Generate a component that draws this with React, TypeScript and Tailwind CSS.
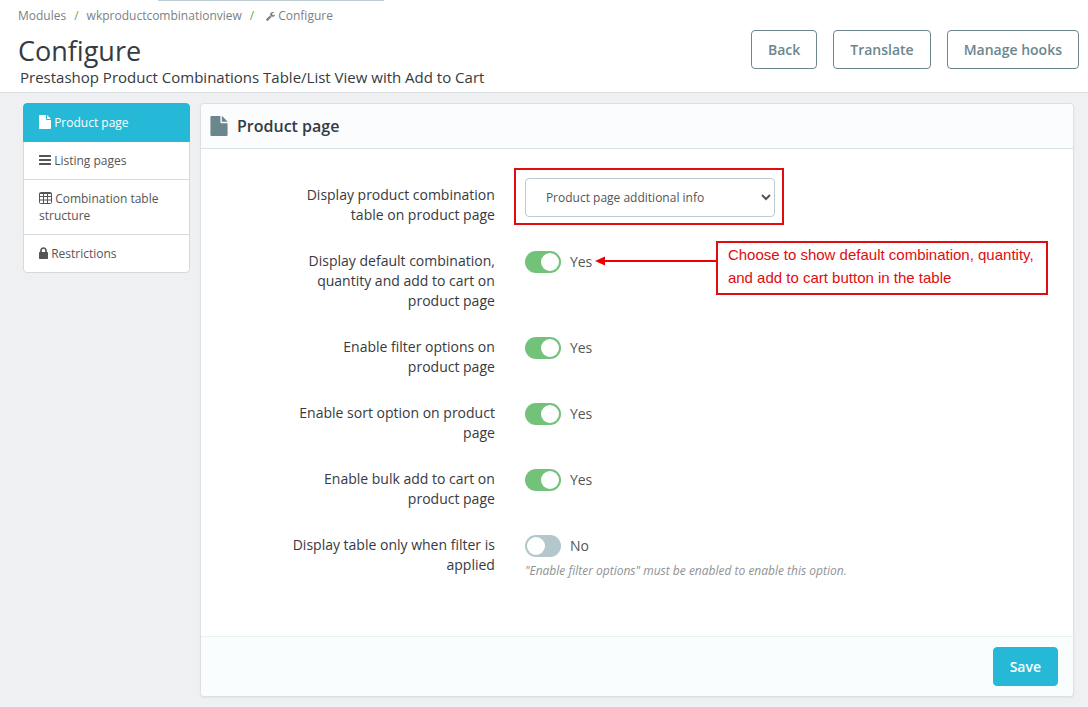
import { useState } from 'react';
import type { ReactNode } from 'react';

interface ToggleOption {
  id: string;
  label: string;
  enabled: boolean;
  hint?: string;
  note?: string;
}

const INITIAL_OPTIONS: ToggleOption[] = [
  {
    id: 'default-combination',
    label: 'Display default combination, quantity and add to cart on product page',
    enabled: true,
    note: 'Choose to show default combination, quantity, and add to cart button in the table',
  },
  { id: 'filter', label: 'Enable filter options on product page', enabled: true },
  { id: 'sort', label: 'Enable sort option on product page', enabled: true },
  { id: 'bulk', label: 'Enable bulk add to cart on product page', enabled: true },
  {
    id: 'only-filtered',
    label: 'Display table only when filter is applied',
    enabled: false,
    hint: '"Enable filter options" must be enabled to enable this option.',
  },
];

function FileIcon({ className }: { className: string }) {
  return (
    <svg viewBox="0 0 12 14" className={className} fill="currentColor" aria-hidden="true">
      <path d="M7 0v4.25c0 .41.34.75.75.75H12v8.25a.75.75 0 0 1-.75.75H.75a.75.75 0 0 1-.75-.75V.75C0 .34.34 0 .75 0H7Zm1 .07c.2.06.38.17.53.32l3.08 3.08c.15.15.26.33.32.53H8V.07Z" />
    </svg>
  );
}

function BarsIcon({ className }: { className: string }) {
  return (
    <svg viewBox="0 0 12 12" className={className} fill="currentColor" aria-hidden="true">
      <rect x="0" y="1" width="12" height="2" rx="0.2" />
      <rect x="0" y="5" width="12" height="2" rx="0.2" />
      <rect x="0" y="9" width="12" height="2" rx="0.2" />
    </svg>
  );
}

function TableIcon({ className }: { className: string }) {
  return (
    <svg viewBox="0 0 13 12" className={className} aria-hidden="true">
      <rect x="0.5" y="0.5" width="12" height="11" rx="1" fill="none" stroke="currentColor" />
      <path d="M0.5 1.5h12M0.5 4.500h12M0.5 8h12M4.500 1v10.5M8.5 1v10.5" stroke="currentColor" fill="none" />
    </svg>
  );
}

function LockIcon({ className }: { className: string }) {
  return (
    <svg viewBox="0 0 9 12" className={className} aria-hidden="true">
      <rect x="0" y="5" width="9" height="7" rx="0.7" fill="currentColor" />
      <path d="M2 5.5V3.5a2.5 2.5 0 0 1 5 0v2" fill="none" stroke="currentColor" strokeWidth="1.7" />
    </svg>
  );
}

function WrenchIcon({ className }: { className: string }) {
  return (
    <svg viewBox="0 0 1664 1664" className={className} fill="currentColor" aria-hidden="true">
      <path d="M1028 924l-682 682q-37 37-90 37-52 0-91-37L59 1498q-38-36-38-90 0-53 38-91l681-681q39 98 114.500 173.500T1028 924zm634-435q0 39-23 106-47 134-164.500 217.500T1216 896q-185 0-316.500-131.500T768 448t131.500-316.500T1216 0q58 0 121.500 16.500T1445 63q16 11 16 28t-16 28l-293 169v224l193 107q5-3 79-48.500t135.500-81T1630 454q15 0 23.500 10t8.500 25z" />
    </svg>
  );
}

interface NavItem {
  label: string;
  icon: ReactNode;
}

const NAV_ITEMS: NavItem[] = [
  { label: 'Product page', icon: <FileIcon className="inline h-[14px] w-[12px] align-[-2px]" /> },
  { label: 'Listing pages', icon: <BarsIcon className="inline size-3 align-[-1px]" /> },
  { label: 'Combination table structure', icon: <TableIcon className="inline h-3 w-[13px] align-[-1px]" /> },
  { label: 'Restrictions', icon: <LockIcon className="inline h-3 w-[9px] align-[-1px]" /> },
];

function HeaderButton({ children }: { children: ReactNode }) {
  return (
    <button
      type="button"
      className="h-[39px] rounded border border-[#6c868e] px-4 text-sm font-semibold text-[#6c868e] hover:bg-[#6c868e] hover:text-white"
    >
      {children}
    </button>
  );
}

function Callout({ text }: { text: string }) {
  return (
    <div className="absolute top-[-10px] left-[70px] flex items-start">
      <svg viewBox="0 0 121 10" className="mt-[15px] h-[10px] w-[121px] shrink-0" aria-hidden="true">
        <path d="M8 5h113" stroke="#ee0000" strokeWidth="2" />
        <path d="M0 5l10-4.500v9z" fill="#ee0000" />
      </svg>
      <p className="w-[332px] border-2 border-[#e00c0f] px-[10px] pb-1 font-['Liberation_Sans',Arial,sans-serif] text-[15px] leading-[23px] text-[#e00c0f]">
        {text}
      </p>
    </div>
  );
}

export default function App() {
  const [activeTab, setActiveTab] = useState('Product page');
  const [options, setOptions] = useState(INITIAL_OPTIONS);

  const toggleOption = (id: string) => {
    setOptions(options.map((o) => (o.id === id ? { ...o, enabled: !o.enabled } : o)));
  };

  return (
    <div className="min-h-screen bg-[#eef0f2] font-['Open_Sans',sans-serif] text-[#363a41]">
      <header className="relative flex h-[93px] items-start justify-between border-b border-[#dadddf] bg-white pr-[9px] pl-[18px]">
        {/* lower edge of the search bar */}
        <div className="absolute top-0 left-[158px] h-px w-[226px] bg-[#bbcdd2]" />
        <div>
          <nav aria-label="Breadcrumb" className="mt-[7px] flex items-center text-xs leading-[17px] text-[#7c7f83]">
            <a href="#modules">Modules</a>
            <span className="px-2 text-[#72a92d]">/</span>
            <a href="#module">wkproductcombinationview</a>
            <span className="px-2 text-[#72a92d]">/</span>
            <a href="#configure" className="flex items-center gap-[3px] pl-1">
              <WrenchIcon className="mt-px size-[9px]" />
              Configure
            </a>
          </nav>
          <h1 className="mt-2 text-[27px] leading-[37px]">Configure</h1>
          <p className="pl-[2px] text-[15px] leading-[16px]">
            Prestashop Product Combinations Table/List View with Add to Cart
          </p>
        </div>
        <div className="mt-[30px] flex gap-4">
          <HeaderButton>Back</HeaderButton>
          <HeaderButton>Translate</HeaderButton>
          <HeaderButton>Manage hooks</HeaderButton>
        </div>
      </header>

      <main className="flex items-start gap-[10px] pt-[10px] pr-[14px] pb-[10px] pl-[23px]">
        <nav aria-label="Settings" className="flex w-[167px] shrink-0 flex-col">
          {NAV_ITEMS.map((item) => (
            <button
              key={item.label}
              type="button"
              onClick={() => setActiveTab(item.label)}
              className={
                'mb-[-1px] border px-[15px] py-[10px] text-left text-xs leading-[17px] first:rounded-t last:rounded-b ' +
                (item.label === activeTab
                  ? 'relative border-[#25b9d7] bg-[#25b9d7] text-white'
                  : 'border-[#d6d9db] bg-white text-[#555555]')
              }
            >
              {item.icon} {item.label}
            </button>
          ))}
        </nav>

        <form
          onSubmit={(e) => e.preventDefault()}
          className="min-w-0 flex-1 rounded border border-[#dbe0e3] bg-white shadow-xs"
        >
          <h2 className="flex h-[45px] items-center gap-[9px] rounded-t border-b border-[#dbe2e5] bg-[#fafcfd] px-[9px] text-base font-semibold">
            <FileIcon className="h-[20px] w-[18px] text-[#6c868e]" />
            Product page
          </h2>

          <div className="flex flex-col gap-[26px] pt-[29px] pr-5 pb-[57px] pl-[19px] text-sm">
            <div className="flex items-start gap-[30px]">
              <label htmlFor="position" className="w-[33%] pt-[7px] pl-[69px] text-right">
                Display product combination table on product page
              </label>
              <div className="relative">
                <select
                  id="position"
                  className="h-[39px] w-[250px] rounded border border-[#bbcdd2] bg-white px-4 pr-0 text-xs text-[#555555]"
                >
                  <option>Product page additional info</option>
                </select>
                <div className="pointer-events-none absolute -top-[10px] -left-[11px] h-[57px] w-[270px] border-2 border-[#e00c0f]" />
              </div>
            </div>

            {options.map((option) => (
              <div key={option.id} className="flex items-start gap-[30px]">
                <label htmlFor={option.id} className="w-[33%] pl-[69px] text-right">
                  {option.label}
                </label>
                <div className="relative">
                  <div className="flex items-center gap-[9px] text-[#555555]">
                    <input
                      id={option.id}
                      type="checkbox"
                      role="switch"
                      checked={option.enabled}
                      onChange={() => toggleOption(option.id)}
                      className="h-[22px] w-9 appearance-none rounded-full bg-[#b3c7cd] p-[2px] before:block before:size-[18px] before:rounded-full before:bg-white checked:bg-[#72c279] checked:pl-4"
                    />
                    <span>{option.enabled ? 'Yes' : 'No'}</span>
                  </div>
                  {option.hint && (
                    <p className="mt-[5px] text-xs leading-[17px] text-[#8f9294] italic">{option.hint}</p>
                  )}
                  {option.note && <Callout text={option.note} />}
                </div>
              </div>
            ))}
          </div>

          <div className="flex justify-end rounded-b border-t border-[#eaeff1] bg-[#fafdfd] px-[15px] py-[10px]">
            <button
              type="submit"
              className="h-[39px] rounded border border-[#25b9d7] bg-[#25b9d7] px-4 text-sm font-semibold text-white hover:bg-[#1e94ab]"
            >
              Save
            </button>
          </div>
        </form>
      </main>
    </div>
  );
}
